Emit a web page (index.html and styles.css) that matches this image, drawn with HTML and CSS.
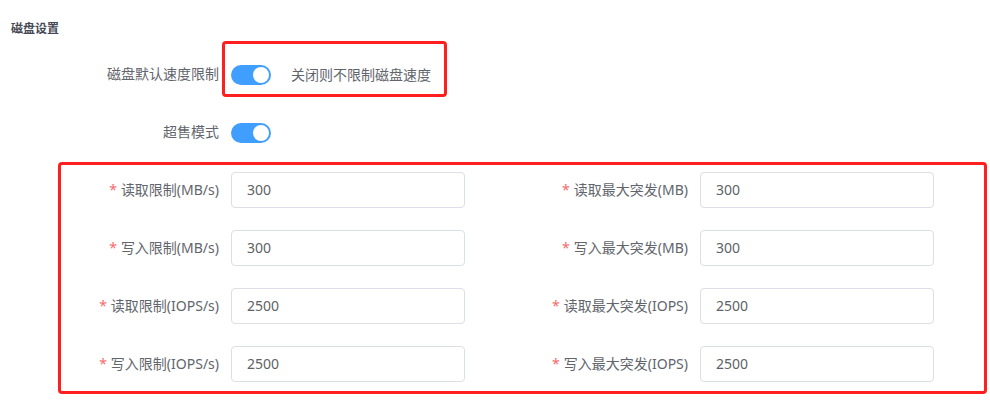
FILE: index.html
```html
<!DOCTYPE html>
<html lang="zh-CN">
<head>
<meta charset="utf-8">
<title>磁盘设置</title>
<link rel="stylesheet" href="styles.css">
</head>
<body>
<div class="page">
  <div class="title">磁盘设置</div>
  <div class="form">
    <div class="item">
      <label class="label">磁盘默认速度限制</label>
      <div class="control">
        <span class="switch on"><span class="knob"></span></span>
        <span class="hint">关闭则不限制磁盘速度</span>
      </div>
    </div>
    <div class="item">
      <label class="label">超售模式</label>
      <div class="control">
        <span class="switch on"><span class="knob"></span></span>
      </div>
    </div>
    <div class="grid">
      <div class="item"><label class="label"><span class="req">*</span>读取限制(MB/s)</label><div class="control"><div class="input">300</div></div></div>
      <div class="item"><label class="label"><span class="req">*</span>读取最大突发(MB)</label><div class="control"><div class="input">300</div></div></div>
      <div class="item"><label class="label"><span class="req">*</span>写入限制(MB/s)</label><div class="control"><div class="input">300</div></div></div>
      <div class="item"><label class="label"><span class="req">*</span>写入最大突发(MB)</label><div class="control"><div class="input">300</div></div></div>
      <div class="item"><label class="label"><span class="req">*</span>读取限制(IOPS/s)</label><div class="control"><div class="input">2500</div></div></div>
      <div class="item"><label class="label"><span class="req">*</span>读取最大突发(IOPS)</label><div class="control"><div class="input">2500</div></div></div>
      <div class="item"><label class="label"><span class="req">*</span>写入限制(IOPS/s)</label><div class="control"><div class="input">2500</div></div></div>
      <div class="item"><label class="label"><span class="req">*</span>写入最大突发(IOPS)</label><div class="control"><div class="input">2500</div></div></div>
    </div>
  </div>
  <div class="mark mark-switch"></div>
  <div class="mark mark-grid"></div>
</div>
</body>
</html>
```
FILE: styles.css
```css
html, body {
  margin: 0;
  padding: 0;
  background: #ffffff;
}
body {
  font-family: "Noto Sans", "Noto Sans CJK SC", sans-serif;
  font-size: 14px;
  color: #606266;
}
.page {
  position: relative;
  width: 990px;
  height: 403px;
  overflow: hidden;
}
.title {
  padding: 19px 0 0 11px;
  height: 20px;
  line-height: 20px;
  font-size: 12px;
  font-weight: bold;
  color: #454956;
}
.form {
  margin-top: 17px;
  width: 938px;
}
.grid {
  display: grid;
  grid-template-columns: 469px 469px;
}
.item {
  display: flex;
  align-items: center;
  height: 36px;
  margin-bottom: 22px;
}
.label {
  width: 231px;
  box-sizing: border-box;
  padding-right: 12px;
  text-align: right;
  line-height: 36px;
  color: #62656c;
  flex: none;
}
.req {
  color: #f56c6c;
  margin-right: 4px;
}
.control {
  display: flex;
  align-items: center;
}
.switch {
  position: relative;
  display: inline-block;
  width: 40px;
  height: 20px;
  border-radius: 10px;
  background: #409eff;
  margin-top: 2px;
}
.knob {
  position: absolute;
  top: 2px;
  right: 2px;
  width: 16px;
  height: 16px;
  border-radius: 50%;
  background: #ffffff;
}
.hint {
  margin-left: 20px;
  color: #62656c;
}
.input {
  width: 234px;
  height: 36px;
  box-sizing: border-box;
  border: 1px solid #dcdfe6;
  border-radius: 4px;
  padding: 0 15px;
  line-height: 34px;
  color: #606266;
}
.mark {
  position: absolute;
  border: 3px solid #ff1f1f;
  border-radius: 4px;
  box-sizing: border-box;
}
.mark-switch {
  left: 222px;
  top: 41px;
  width: 225px;
  height: 56px;
}
.mark-grid {
  left: 58px;
  top: 162px;
  width: 929px;
  height: 232px;
}
```
